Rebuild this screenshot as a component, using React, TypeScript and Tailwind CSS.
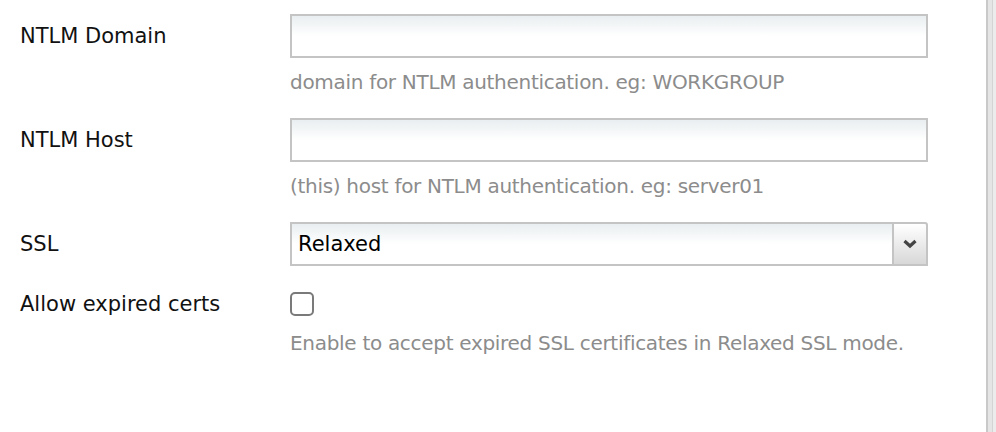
import React from 'react';

const font = { fontFamily: '"DejaVu Sans", Verdana, sans-serif' };

const TextRow: React.FC<{ label: string; help: string }> = ({ label, help }) => (
  <div className="flex items-start mb-[24px]">
    <label className="w-[270px] ml-[20px] leading-[44px] text-[21px] text-[#111]">{label}</label>
    <div className="w-[638px]">
      <div className="h-[44px] border-2 border-[#c4c4c4] bg-gradient-to-b from-[#e9eef0] via-white to-white" />
      <p className="mt-[12px] leading-[24px] text-[20px] tracking-[-0.3px] text-[#8c8c8c]">{help}</p>
    </div>
  </div>
);

export default function App() {
  return (
    <div className="relative w-[996px] h-[432px] bg-white overflow-hidden" style={font}>
      <div className="pt-[14px]">
        <TextRow label="NTLM Domain" help="domain for NTLM authentication. eg: WORKGROUP" />
        <TextRow label="NTLM Host" help="(this) host for NTLM authentication. eg: server01" />

        {/* SSL select */}
        <div className="flex items-start">
          <label className="w-[270px] ml-[20px] leading-[44px] text-[21px] text-[#111]">SSL</label>
          <div className="w-[638px] h-[44px] flex border-2 border-[#c4c4c4] rounded-tr-[3px] bg-gradient-to-b from-[#e9eef0] via-white to-white">
            <span className="flex-1 pl-[6px] leading-[40px] text-[21px] text-black">Relaxed</span>
            <div className="w-[34px] h-full border-l-2 border-[#c4c4c4] rounded-tr-[2px] bg-gradient-to-b from-white to-[#d8d8d8] flex items-center justify-center">
              <svg width="16" height="12" viewBox="0 0 16 12">
                <path d="M2.5 3 L8 8 L13.5 3" fill="none" stroke="#444" strokeWidth="3.2" />
              </svg>
            </div>
          </div>
        </div>

        {/* Allow expired certs */}
        <div className="flex items-start mt-[24px]">
          <label className="w-[270px] ml-[20px] leading-[28px] text-[21px] text-[#111]">Allow expired certs</label>
          <div className="w-[638px]">
            <div className="h-[28px] flex items-center">
              <div className="w-[24px] h-[24px] rounded-[5px] border-2 border-[#7a7a7a] bg-white" />
            </div>
            <p className="mt-[13px] leading-[24px] text-[20px] tracking-[-0.3px] text-[#8c8c8c]">
              Enable to accept expired SSL certificates in Relaxed SSL mode.
            </p>
          </div>
        </div>
      </div>

      {/* right edge scrollbar track */}
      <div className="absolute top-0 right-0 h-full w-[10px] flex">
        <div className="w-[2px] bg-[#c9c9c9]" />
        <div className="w-[4px] bg-[#e5e5e5]" />
        <div className="w-[1px] bg-[#d4d4d4]" />
        <div className="w-[3px] bg-[#ececec]" />
      </div>
    </div>
  );
}
